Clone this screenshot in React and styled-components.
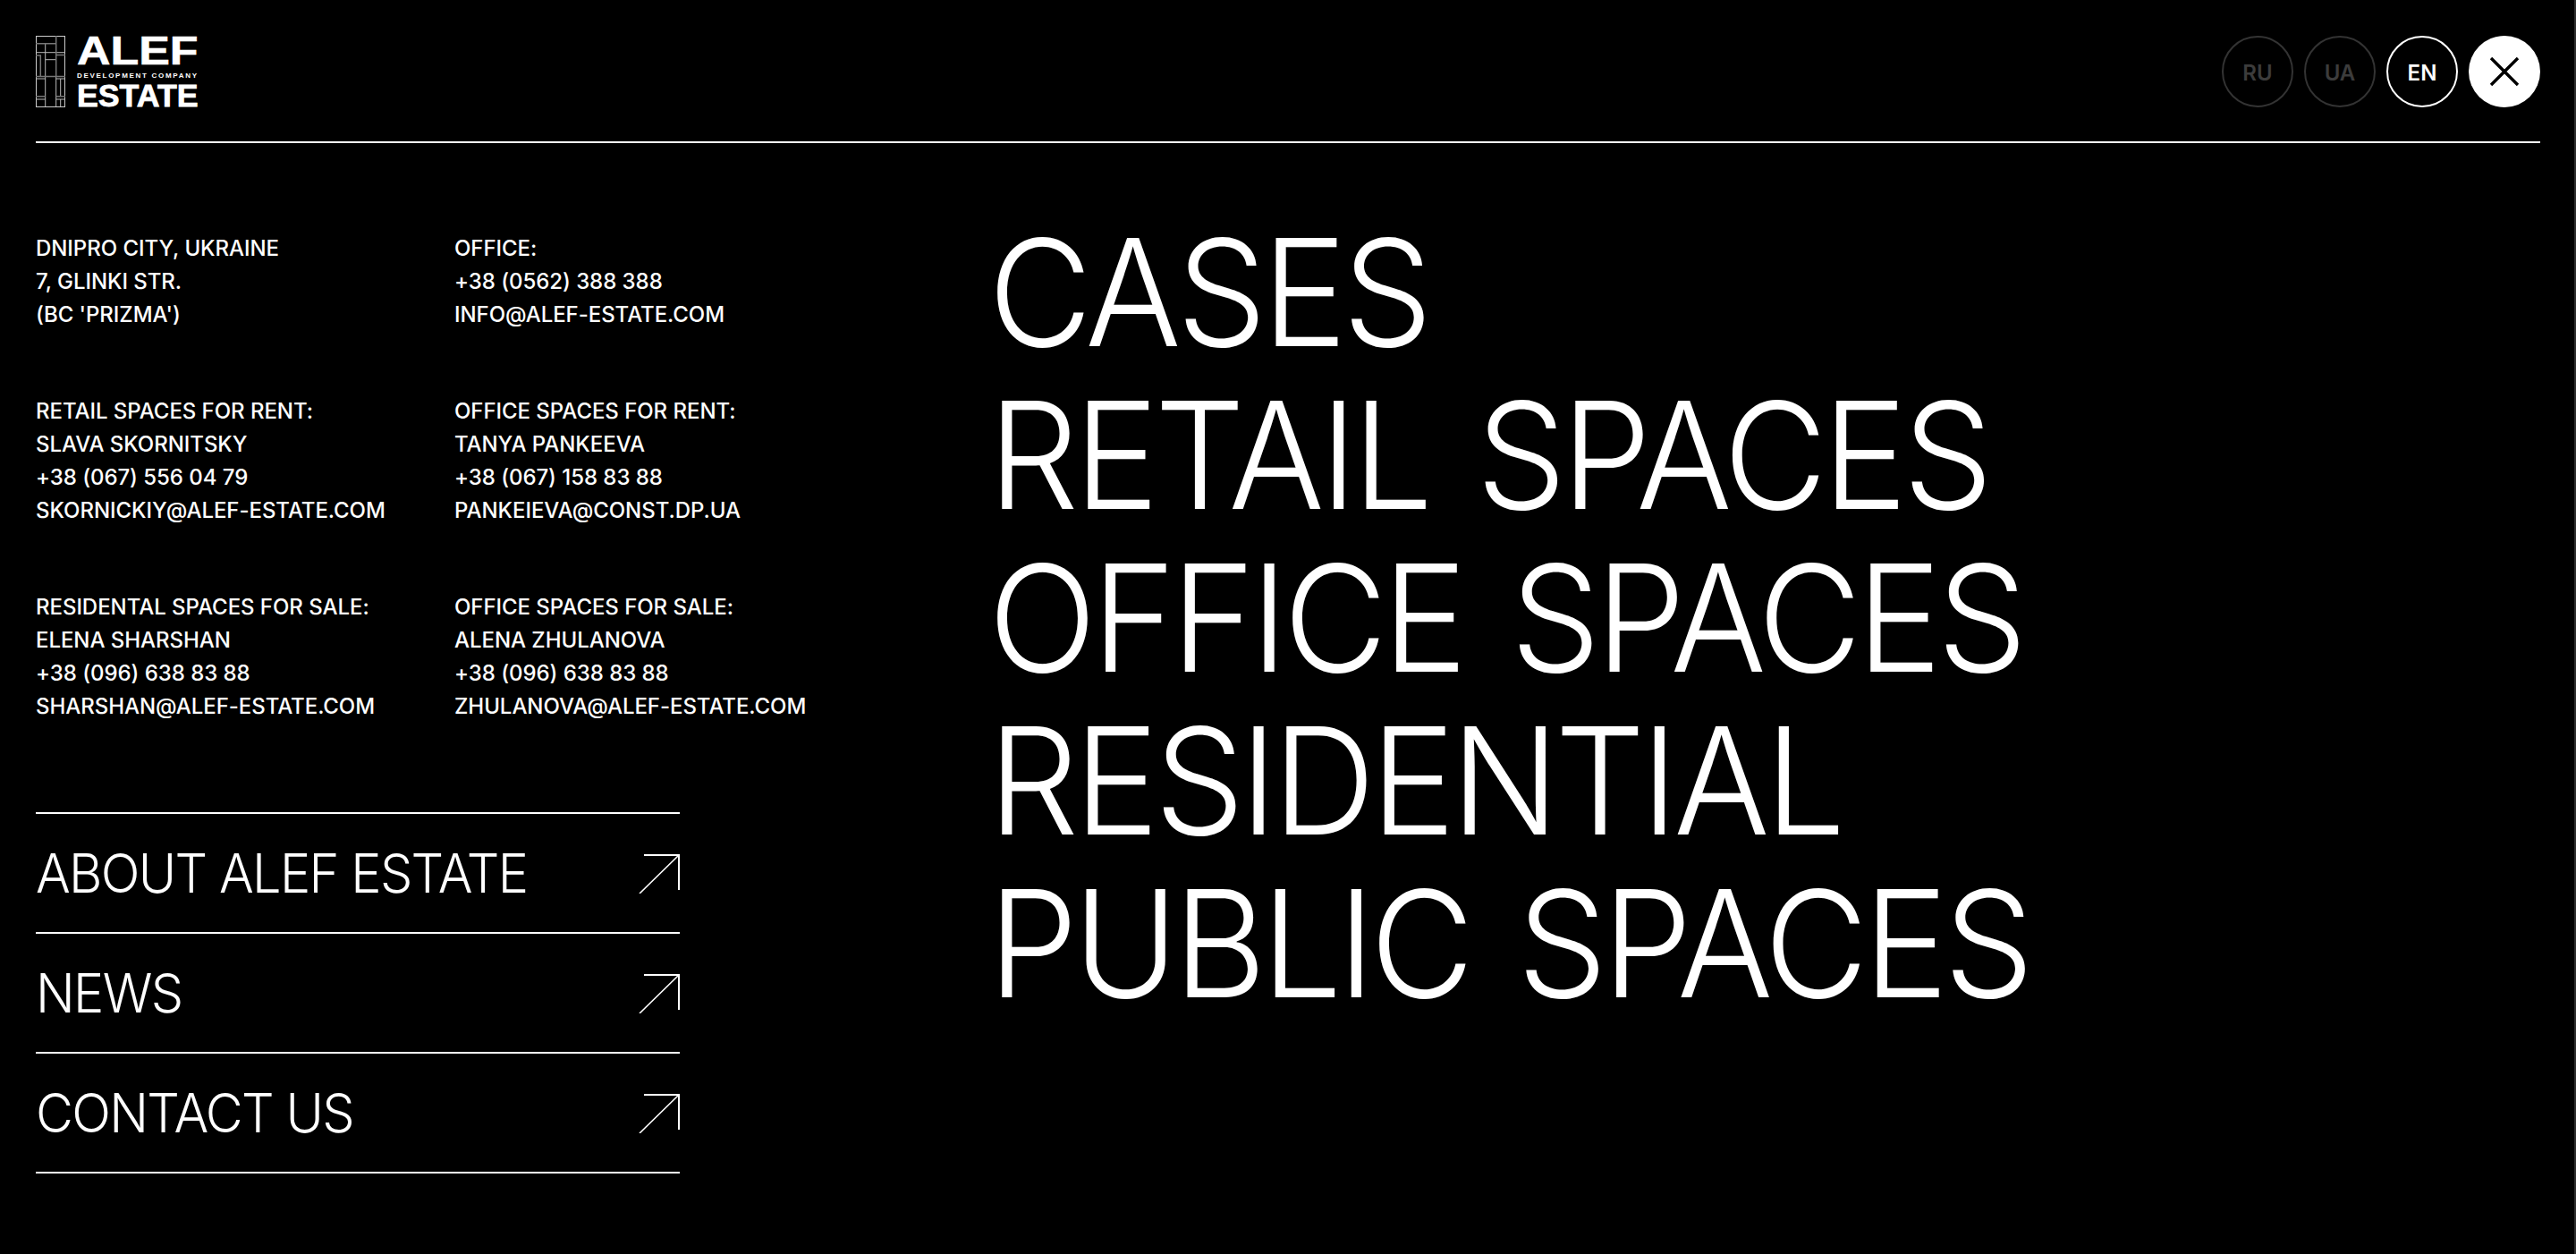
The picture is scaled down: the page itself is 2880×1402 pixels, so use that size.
import React from 'react';
import styled, { createGlobalStyle } from 'styled-components';

const GlobalStyle = createGlobalStyle`
  html, body {
    margin: 0;
    padding: 0;
    background: #000;
  }
  * {
    box-sizing: border-box;
  }
`;

const Page = styled.div`
  width: 2880px;
  height: 1402px;
  padding: 0 38px 0 40px;
  background: #000;
  border-right: 2px solid #2e2e2e;
  color: #fff;
  font-family: Inter, "Liberation Sans", sans-serif;
  overflow: hidden;
`;

const Header = styled.header`
  height: 160px;
  display: flex;
  align-items: flex-start;
  justify-content: space-between;
  padding-top: 40px;
  border-bottom: 2px solid #fff;
`;

const Controls = styled.div`
  display: flex;
  gap: 12px;
`;

const LangButton = styled.button`
  width: 80px;
  height: 80px;
  padding: 2px 0 0;
  border-radius: 50%;
  background: transparent;
  border: 2px solid ${(p) => (p.$active ? '#fff' : '#333')};
  color: ${(p) => (p.$active ? '#fff' : '#3c3c3c')};
  font-family: inherit;
  font-size: 24px;
  font-weight: 600;
`;

const CloseButton = styled.button`
  width: 80px;
  height: 80px;
  padding: 0;
  border: 0;
  border-radius: 50%;
  background: #fff;
  display: flex;
  align-items: center;
  justify-content: center;
`;

const LogoWrap = styled.div`
  display: flex;
  align-items: flex-start;
  gap: 13px;
`;

const LogoText = styled.div`
  width: 134px;
  font-family: "Liberation Sans", Arial, sans-serif;
  font-weight: 700;
`;

const LogoWord = styled.div`
  font-size: ${(p) => p.$size}px;
  line-height: ${(p) => p.$lh}px;
  letter-spacing: ${(p) => p.$spacing || 0}px;
  white-space: nowrap;
  transform: scaleX(${(p) => p.$stretch || 1});
  transform-origin: left center;
  -webkit-text-stroke: ${(p) => p.$stroke || 0}px #fff;
`;

const Main = styled.main`
  display: grid;
  grid-template-columns: 1065px 1fr;
`;

const LeftColumn = styled.div`
  display: flex;
  flex-direction: column;
`;

const Contacts = styled.div`
  display: grid;
  grid-template-columns: 468px 1fr;
  row-gap: 71px;
  padding-top: 99px;
`;

const ContactBlock = styled.div`
  font-size: 24px;
  font-weight: 500;
  line-height: 37px;
  letter-spacing: -0.05px;
  white-space: nowrap;
`;

const LinkList = styled.nav`
  width: 720px;
  margin-top: 100px;
  border-top: 2px solid #fff;
`;

const LinkRow = styled.a`
  height: 134px;
  display: flex;
  align-items: center;
  justify-content: space-between;
  border-bottom: 2px solid #fff;
  color: #fff;
`;

const LinkLabel = styled.span`
  font-size: 60px;
  font-weight: 300;
  letter-spacing: -1.75px;
  transform: scaleX(0.96);
  transform-origin: left center;
`;

const BigMenu = styled.nav`
  padding-top: 76px;
  display: flex;
  flex-direction: column;
`;

const BigLink = styled.a`
  font-size: 166px;
  line-height: 182px;
  font-weight: 300;
  letter-spacing: -5.3px;
  word-spacing: 14px;
  color: #fff;
  white-space: nowrap;
  transform: scaleX(0.96);
  transform-origin: left center;
`;

const contacts = [
  ['DNIPRO CITY, UKRAINE', '7, GLINKI STR.', "(BC 'PRIZMA')"],
  ['OFFICE:', '+38 (0562) 388 388', 'INFO@ALEF-ESTATE.COM'],
  ['RETAIL SPACES FOR RENT:', 'SLAVA SKORNITSKY', '+38 (067) 556 04 79', 'SKORNICKIY@ALEF-ESTATE.COM'],
  ['OFFICE SPACES FOR RENT:', 'TANYA PANKEEVA', '+38 (067) 158 83 88', 'PANKEIEVA@CONST.DP.UA'],
  ['RESIDENTAL SPACES FOR SALE:', 'ELENA SHARSHAN', '+38 (096) 638 83 88', 'SHARSHAN@ALEF-ESTATE.COM'],
  ['OFFICE SPACES FOR SALE:', 'ALENA ZHULANOVA', '+38 (096) 638 83 88', 'ZHULANOVA@ALEF-ESTATE.COM'],
];

const Arrow = () => (
  <svg width="46" height="46" viewBox="0 0 46 46" fill="none" stroke="#fff">
    <path d="M6 3H45V42" strokeWidth="2" />
    <path d="M45 3L1 46" strokeWidth="1.6" />
  </svg>
);

const LogoMark = () => (
  <svg width="33" height="80" viewBox="0 0 33 80" fill="none">
    <rect x="0.5" y="0.5" width="32" height="79" stroke="#ccc" />
    <path
      d="M0 18.7H33M10.7 8.7V79M22.7 46V79M0 48H10.7M22.7 48H33M10.7 26.7H22.7M27.7 48V68M27.7 71V79M0 71H10.7M22.7 71H33"
      stroke="#bbb"
    />
    <path
      d="M0 8.7H22.7M22.7 0V46M0 22H5.3V45M22.7 21.5H33M0 45.5H33M0 67.7H10.7M22.7 67.7H33"
      stroke="#777"
      strokeWidth="1.5"
    />
  </svg>
);

const Logo = () => (
  <LogoWrap>
    <LogoMark />
    <LogoText>
      <LogoWord $size={44} $lh={34} $stretch={1.18} $stroke={0.6}>ALEF</LogoWord>
      <LogoWord $size={8} $lh={22} $spacing={1.7}>DEVELOPMENT COMPANY</LogoWord>
      <LogoWord $size={35} $lh={22} $stretch={1.02} $stroke={0.8}>ESTATE</LogoWord>
    </LogoText>
  </LogoWrap>
);

export default function App() {
  return (
    <Page>
      <GlobalStyle />
      <Header>
        <Logo />
        <Controls>
          <LangButton>RU</LangButton>
          <LangButton>UA</LangButton>
          <LangButton $active>EN</LangButton>
          <CloseButton>
            <svg width="34" height="34" viewBox="0 0 34 34" stroke="#000" strokeWidth="3.4" fill="none">
              <path d="M2 2L32 32M32 2L2 32" />
            </svg>
          </CloseButton>
        </Controls>
      </Header>
      <Main>
        <LeftColumn>
          <Contacts>
            {contacts.map((lines, i) => (
              <ContactBlock key={i}>
                {lines.map((line) => (
                  <div key={line}>{line}</div>
                ))}
              </ContactBlock>
            ))}
          </Contacts>
          <LinkList>
            {['ABOUT ALEF ESTATE', 'NEWS', 'CONTACT US'].map((label) => (
              <LinkRow key={label}>
                <LinkLabel>{label}</LinkLabel>
                <Arrow />
              </LinkRow>
            ))}
          </LinkList>
        </LeftColumn>
        <BigMenu>
          {['CASES', 'RETAIL SPACES', 'OFFICE SPACES', 'RESIDENTIAL', 'PUBLIC SPACES'].map((label) => (
            <BigLink key={label}>{label}</BigLink>
          ))}
        </BigMenu>
      </Main>
    </Page>
  );
}
